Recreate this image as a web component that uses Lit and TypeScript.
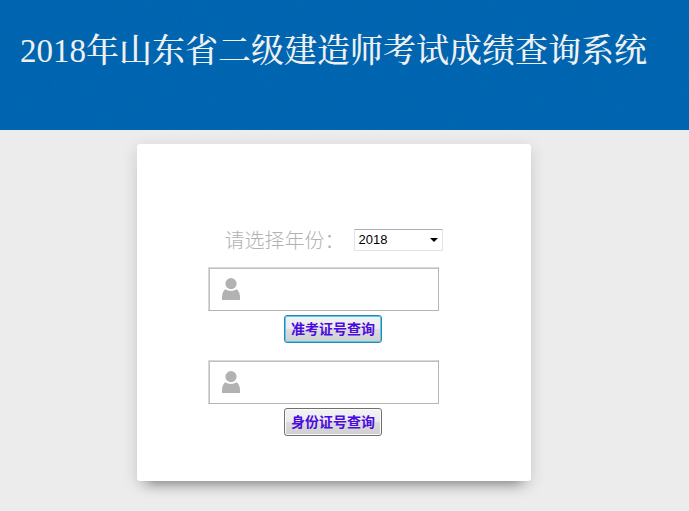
import { LitElement, html, css } from "lit";
import { customElement, property } from "lit/decorators.js";

const personIcon = html`<svg class="icon" viewBox="0 0 18 22" aria-hidden="true">
  <circle cx="9" cy="5.600" r="5.600" />
  <path d="M3.500 11.200c3.200 2.300 7.800 2.300 11 0c2.400 1.300 3.500 4.300 3.500 8.300V22H0v-2.500c0-4 1.100-7 3.500-8.300z" />
</svg>`;

@customElement("query-field")
export class QueryField extends LitElement {
  @property() name = "";
  @property() action = "";
  @property({ type: Boolean, reflect: true }) primary = false;

  static styles = css`
    :host {
      display: flex;
      flex-direction: column;
      align-items: center;
      gap: 4px;
    }
    .frame {
      box-sizing: border-box;
      display: flex;
      align-items: center;
      width: 231px;
      max-width: 100%;
      height: 44px;
      margin-right: 20px;
      padding-left: 13px;
      border: 1px solid #b5b5b5;
      border-left-color: #d8d8d8;
      border-top-color: #d8d8d8;
      box-shadow: inset 1px 1px 0 #c0c0c0;
      background: #fff;
    }
    .icon {
      flex: none;
      width: 18px;
      height: 22px;
      fill: #b2b2b2;
    }
    .input {
      flex: 1;
      min-width: 0;
      height: 36px;
      padding: 0 12px;
      border: 0;
      outline: 0;
      background: transparent;
      font: 16px "Liberation Sans", "Noto Sans CJK SC", sans-serif;
    }
    .button {
      box-sizing: border-box;
      height: 28px;
      margin-right: 2px;
      padding: 0 6px 3px;
      border: 1px solid #707070;
      border-radius: 3px;
      box-shadow: inset 0 0 0 1px #fbfbfb;
      background: linear-gradient(#f2f2f2, #ebebeb 50%, #dddddd 50%, #cfcfcf);
      color: #4b0be0;
      font: bold 14px/22px "Noto Sans CJK SC", sans-serif;
      white-space: nowrap;
    }
    :host([primary]) .button {
      border-color: #3c7fb1;
      box-shadow: inset 0 0 0 1px #48d1f5;
    }
  `;

  render() {
    return html`
      <div class="frame">
        ${personIcon}
        <input class="input" type="text" name=${this.name} aria-label=${this.action} />
      </div>
      <button class="button" type="button">${this.action}</button>
    `;
  }
}

@customElement("app-root")
export class AppRoot extends LitElement {
  static styles = css`
    :host {
      display: block;
      min-height: 100vh;
      background: #ececec;
    }
    .banner {
      display: grid;
      height: 130px;
      background: #0064b0;
      overflow: hidden;
    }
    .texture,
    .title {
      grid-area: 1 / 1;
    }
    .texture {
      width: 100%;
      height: 130px;
    }
    .title {
      margin: 0;
      padding: 27px 20px 0;
      color: #f0f0f0;
      font: 500 33px/48px "Liberation Serif", "Noto Serif CJK SC", "Noto Sans CJK SC", serif;
      white-space: nowrap;
      z-index: 1;
    }
    .main {
      display: flex;
      justify-content: center;
      padding: 14px 21px 30px 0;
    }
    .card {
      box-sizing: border-box;
      display: flex;
      flex-direction: column;
      width: 59%;
      min-width: 280px;
      padding: 82px 0 45px;
      border-radius: 3px;
      background: #fff;
      box-shadow: 0 12px 12px -10px rgba(0, 0, 0, 0.4), 0 4px 16px rgba(0, 0, 0, 0.14);
    }
    .year {
      display: flex;
      align-items: center;
      justify-content: center;
      gap: 10px;
      height: 28px;
      margin-bottom: 13px;
    }
    .label {
      color: #b2b2b2;
      font: 300 20px/28px "Noto Sans CJK SC", sans-serif;
    }
    .picker {
      display: grid;
      align-items: center;
    }
    .select,
    .arrow {
      grid-area: 1 / 1;
    }
    .select {
      box-sizing: border-box;
      width: 89px;
      height: 22px;
      padding: 0 3px;
      appearance: none;
      border: 1px solid #e2e3ea;
      border-top-color: #abadb3;
      border-radius: 1px;
      background: #fff;
      color: #000;
      font: 13px/20px "Liberation Sans", "Noto Sans CJK SC", sans-serif;
    }
    .arrow {
      justify-self: end;
      width: 8px;
      height: 4px;
      margin-right: 5px;
      pointer-events: none;
      z-index: 1;
    }
    .fields {
      display: flex;
      flex-direction: column;
      gap: 17px;
    }
  `;

  render() {
    return html`
      <header class="banner">
        <svg class="texture" aria-hidden="true">
          <filter id="grain" x="0" y="0" width="100%" height="100%">
            <feTurbulence type="fractalNoise" baseFrequency="0.6" numOctaves="2" seed="4" />
            <feColorMatrix values="0 0 0 0 0  0 0 0 0 0.2  0 0 0 0 0.4  3 0 0 0 -1.5" />
          </filter>
          <rect width="100%" height="100%" filter="url(#grain)" opacity="0.3" />
        </svg>
        <h1 class="title">2018年山东省二级建造师考试成绩查询系统</h1>
      </header>
      <main class="main">
        <form class="card">
          <div class="year">
            <label class="label" for="year">请选择年份：</label>
            <div class="picker">
              <select class="select" id="year">
                <option>2018</option>
              </select>
              <svg class="arrow" viewBox="0 0 8 4" aria-hidden="true"><path d="M0 0h8L4 4z" /></svg>
            </div>
          </div>
          <div class="fields">
            <query-field primary name="ticket" action="准考证号查询"></query-field>
            <query-field name="identity" action="身份证号查询"></query-field>
          </div>
        </form>
      </main>
    `;
  }
}
